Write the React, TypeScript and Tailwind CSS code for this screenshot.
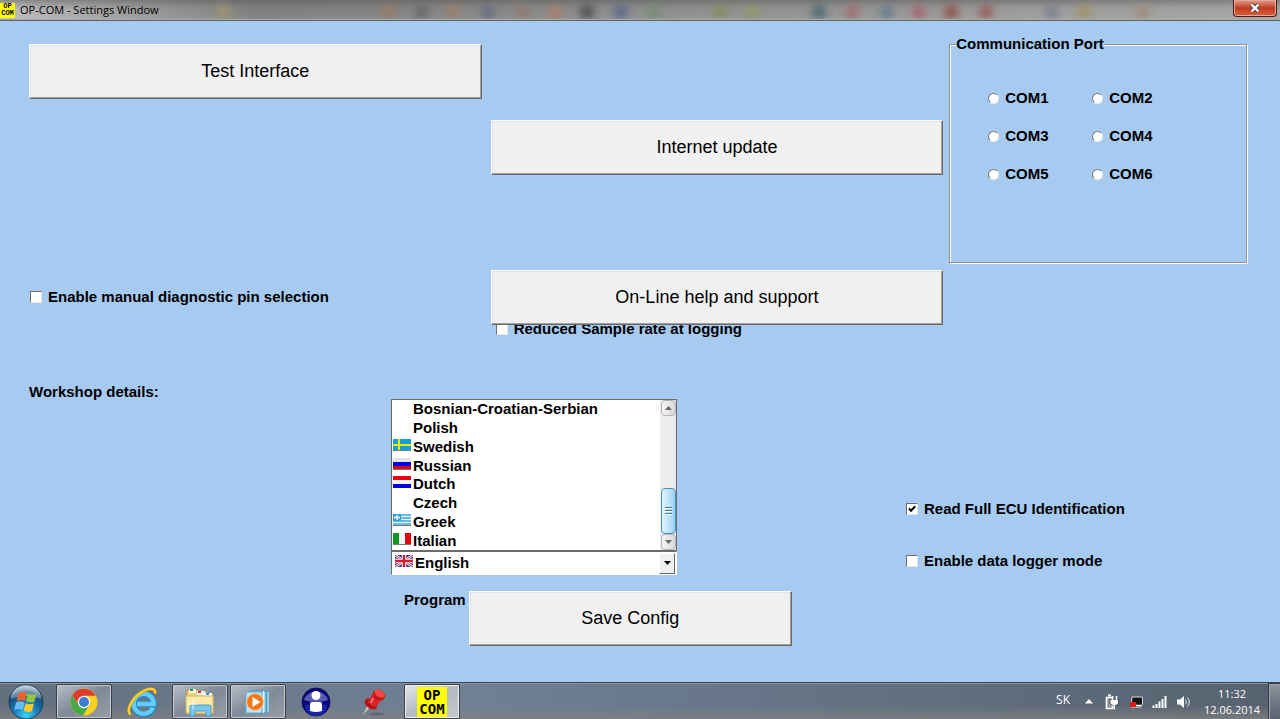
import React, { useState } from 'react';

const PORTS = ['COM1', 'COM2', 'COM3', 'COM4', 'COM5', 'COM6'];

const LANGUAGES = [
  'Bosnian-Croatian-Serbian',
  'Polish',
  'Swedish',
  'Russian',
  'Dutch',
  'Czech',
  'Greek',
  'Italian',
];

// Soft shapes showing through the glass title bar
const GLASS_SPOTS = [
  { x: 223, color: '#a89a60' },
  { x: 388, color: '#a07860' },
  { x: 422, color: '#5e5e62' },
  { x: 453, color: '#a07f66' },
  { x: 488, color: '#5f6580' },
  { x: 523, color: '#93766a' },
  { x: 555, color: '#b07a60' },
  { x: 587, color: '#3c3c3c' },
  { x: 621, color: '#4c5a8c' },
  { x: 654, color: '#6f8a70' },
  { x: 720, color: '#7f8f50' },
  { x: 752, color: '#8a9a58' },
  { x: 819, color: '#365866' },
  { x: 852, color: '#a06468' },
  { x: 887, color: '#58788c' },
  { x: 919, color: '#a85868' },
  { x: 951, color: '#8c3c34' },
  { x: 986, color: '#984a44' },
  { x: 1052, color: '#75788c' },
  { x: 1084, color: '#a09058' },
  { x: 1142, color: '#a08270' },
];

function Flag({ name }: { name: string }) {
  const common = { width: 18, height: 12, viewBox: '0 0 18 12', className: 'shrink-0', 'aria-hidden': true };
  switch (name) {
    case 'Swedish':
      return (
        <svg {...common}>
          <rect width="18" height="11" fill="#12a0dc" />
          <path d="M5 0h2v11H5zM0 5h18v2H0z" fill="#f4e800" />
          <path d="M0 11.5h18" stroke="#777" />
        </svg>
      );
    case 'Russian':
      return (
        <svg {...common}>
          <rect width="18" height="4" fill="#e4e4e4" />
          <rect y="4" width="18" height="4" fill="#0000e8" />
          <rect y="8" width="18" height="3" fill="#e00010" />
          <path d="M0 11.5h18" stroke="#777" />
        </svg>
      );
    case 'Dutch':
      return (
        <svg {...common}>
          <rect width="18" height="4" fill="#e80010" />
          <rect y="4" width="18" height="4" fill="#f4f4f4" />
          <rect y="8" width="18" height="4" fill="#0000d8" />
        </svg>
      );
    case 'Greek':
      return (
        <svg {...common}>
          <rect width="18" height="11" fill="#e8f4fa" />
          <path d="M0 1h18M0 4h18M0 7h18M0 10h18" stroke="#3fa9dc" strokeWidth="1.5" />
          <rect width="8" height="7" fill="#2f9fd8" />
          <path d="M4 1v5M1 3.5h6" stroke="#fff" strokeWidth="1.3" />
          <path d="M0 11.5h18" stroke="#777" />
        </svg>
      );
    case 'Italian':
      return (
        <svg {...common}>
          <rect width="6" height="11" fill="#0a9820" />
          <rect x="6" width="6" height="11" fill="#f2f2f2" />
          <rect x="12" width="6" height="11" fill="#e80010" />
          <path d="M0 11.5h18" stroke="#777" />
        </svg>
      );
    case 'English':
      return (
        <svg {...common}>
          <rect width="18" height="12" fill="#2c3a9c" />
          <path d="M0 0l18 12M18 0L0 12" stroke="#f0f0f4" strokeWidth="2.6" />
          <path d="M0 0l18 12M18 0L0 12" stroke="#d83040" strokeWidth="1" />
          <path d="M9 0v12M0 6h18" stroke="#f4f4f4" strokeWidth="4.4" />
          <path d="M9 0v12M0 6h18" stroke="#dc1c2c" strokeWidth="2.4" />
        </svg>
      );
    default:
      return <span className="w-[18px] shrink-0" />;
  }
}

function ClassicButton({ children, className = '' }: { children: React.ReactNode; className?: string }) {
  return (
    <button
      type="button"
      className={`h-[55px] border border-t-white border-l-white border-r-[#696969] border-b-[#696969] bg-[#f0f0f0] pb-0.5 text-lg leading-5 text-black shadow-[inset_-1px_-1px_0_#a0a0a0,inset_1px_1px_0_#e3e3e3] ${className}`}
    >
      {children}
    </button>
  );
}

function CheckOption({ label, checked = false, className = '' }: { label: string; checked?: boolean; className?: string }) {
  const [on, setOn] = useState(checked);
  return (
    <label className={`flex h-[18px] items-center gap-1.5 whitespace-nowrap ${className}`}>
      <span className="relative flex">
        <input
          type="checkbox"
          checked={on}
          onChange={() => setOn(!on)}
          className="h-3 w-3 appearance-none border border-t-[#6e6e6e] border-r-[#e8e8e8] border-b-[#e8e8e8] border-l-[#6e6e6e] bg-white"
        />
        {on && (
          <svg viewBox="0 0 12 12" className="pointer-events-none absolute inset-0 h-3 w-3" aria-hidden>
            <path d="M3 5.5l2 2.2 4.2-4.4" fill="none" stroke="#000" strokeWidth="2" />
          </svg>
        )}
      </span>
      {label}
    </label>
  );
}

function TitleBar() {
  return (
    <header className="relative flex h-[21px] items-start justify-between border-b border-[#5d6468] bg-linear-to-r from-[#bdbdbd] via-[#7f7f7f] via-20% to-[#a6a6a4]">
      <svg className="absolute inset-0 h-5 w-full" viewBox="0 0 1280 20" preserveAspectRatio="none" aria-hidden>
        <defs>
          <filter id="soft" x="-100%" y="-100%" width="300%" height="300%">
            <feGaussianBlur stdDeviation="4" />
          </filter>
          <linearGradient id="shade" x1="0" y1="0" x2="0" y2="1">
            <stop offset="0" stopColor="#444" stopOpacity=".4" />
            <stop offset=".5" stopColor="#666" stopOpacity="0" />
            <stop offset="1" stopColor="#fff" stopOpacity=".1" />
          </linearGradient>
        </defs>
        <rect width="1280" height="20" fill="url(#shade)" />
        {GLASS_SPOTS.map(spot => (
          <circle key={spot.x} cx={spot.x} cy="12" r="7" fill={spot.color} opacity=".8" filter="url(#soft)" />
        ))}
        <path d="M0 19.5h1280" stroke="#a9a9a4" />
      </svg>
      <div className="relative flex h-5 items-center gap-[5px]">
        <span className="flex h-[15px] w-[15px] flex-col items-center justify-center overflow-hidden bg-[#ffff00] font-['Liberation_Mono'] text-[7px] leading-[7px] font-bold">
          <span>OP</span>
          <span>COM</span>
        </span>
        <h1 className="font-['Open_Sans',sans-serif] text-[11px] leading-5 text-black">OP-COM - Settings Window</h1>
      </div>
      <button
        type="button"
        aria-label="Close"
        className="relative mr-[3px] flex h-[17px] w-[44px] items-center justify-center rounded-b border border-t-0 border-[#4a1a14] bg-linear-to-b from-[#dd9c8c] via-[#c23a20] via-50% to-[#d8603c] shadow-[inset_0_0_0_1px_#e8a898]"
      >
        <svg width="12" height="10" viewBox="0 0 12 10" aria-hidden>
          <path d="M2.5 1.5l7 7M9.5 1.5l-7 7" stroke="#4c4c5c" strokeWidth="4" />
          <path d="M2.5 1.5l7 7M9.5 1.5l-7 7" stroke="#fff" strokeWidth="2.2" />
        </svg>
      </button>
    </header>
  );
}

function PortGroup() {
  const [port, setPort] = useState('');
  return (
    <fieldset className="h-[228px] border border-[#8e9094] pl-[38px] shadow-[1px_1px_0_#fff,inset_1px_1px_0_#fff]">
      <legend className="-ml-8 bg-[#a6caf0] leading-[18px]">Communication Port</legend>
      <div className="mt-[26px] grid w-[208px] grid-cols-2">
        {PORTS.map(name => (
          <label key={name} className="flex h-[38px] items-center gap-1.5">
            <input
              type="radio"
              name="port"
              value={name}
              checked={port === name}
              onChange={() => setPort(name)}
              className="h-[11px] w-[11px] appearance-none rounded-full border border-t-[#777] border-r-[#eee] border-b-[#eee] border-l-[#777] bg-white checked:bg-black"
            />
            {name}
          </label>
        ))}
      </div>
    </fieldset>
  );
}

function LanguagePicker() {
  return (
    <div className="w-[286px]">
      <div className="flex h-[152px] border border-[#6b6b6b] bg-white">
        <ul role="listbox" aria-label="Languages" className="flex flex-1 flex-col">
          {LANGUAGES.map(lang => (
            <li key={lang} role="option" aria-selected={false} className="flex min-h-0 flex-1 items-center gap-0.5 pl-px leading-[18px]">
              <span className="flex pb-1">
                <Flag name={lang} />
              </span>
              {lang}
            </li>
          ))}
        </ul>
        <div className="flex w-4 flex-col items-center bg-[#ececec]">
          <button type="button" aria-label="Scroll up" className="flex h-4 w-[15px] items-center justify-center rounded-sm border border-[#b4b4b4] bg-linear-to-r from-[#f6f6f6] to-[#d6d6d6]">
            <svg width="7" height="4" viewBox="0 0 7 4" aria-hidden>
              <path d="M0 4l3.5-4L7 4z" fill="#666" />
            </svg>
          </button>
          <div className="flex-1" />
          <div className="flex h-[46px] w-[15px] flex-col items-center justify-center gap-px rounded-sm border border-[#4a90bc] bg-linear-to-r from-[#e2f4fd] via-[#c0e4f8] to-[#98d0f0]">
            <span className="h-0.5 w-[7px] border-b border-white bg-[#3b7394]" />
            <span className="h-0.5 w-[7px] border-b border-white bg-[#3b7394]" />
            <span className="h-0.5 w-[7px] border-b border-white bg-[#3b7394]" />
          </div>
          <button type="button" aria-label="Scroll down" className="flex h-4 w-[15px] items-center justify-center rounded-sm border border-[#b4b4b4] bg-linear-to-r from-[#f6f6f6] to-[#d6d6d6]">
            <svg width="7" height="4" viewBox="0 0 7 4" aria-hidden>
              <path d="M0 0l3.5 4L7 0z" fill="#666" />
            </svg>
          </button>
        </div>
      </div>
      <div className="flex h-6 items-center border border-t-[#6b6b6b] border-r-white border-b-white border-l-[#6b6b6b] bg-white pr-px pl-[3px]">
        <span className="flex pb-1">
          <Flag name="English" />
        </span>
        <select id="program-language" className="h-5 min-w-0 flex-1 appearance-none bg-white pl-0.5 leading-5 font-bold text-black">
          <option>English</option>
        </select>
        <span className="flex h-[21px] w-4 items-center justify-center border border-t-white border-r-[#666] border-b-[#666] border-l-white bg-[#f0f0f0]">
          <svg width="7" height="4" viewBox="0 0 7 4" aria-hidden>
            <path d="M0 0h7L3.5 4z" fill="#000" />
          </svg>
        </span>
      </div>
    </div>
  );
}

function StartOrb() {
  return (
    <svg width="36" height="36" viewBox="0 0 36 36" aria-hidden>
      <defs>
        <radialGradient id="orb" cx=".5" cy=".9" r=".85">
          <stop offset="0" stopColor="#38d4f8" />
          <stop offset=".45" stopColor="#1878b4" />
          <stop offset=".8" stopColor="#174a74" />
          <stop offset="1" stopColor="#9ab8cc" />
        </radialGradient>
      </defs>
      <circle cx="18" cy="18" r="17" fill="url(#orb)" stroke="#1b3c5a" />
      <path d="M3 15a15 14 0 0 1 30 0c-8-4-22-4-30 0z" fill="#fff" opacity=".35" />
      <path d="M10.500 9.500c3-2 5-2 8-.5l-1.500 8c-3-1.500-5-1.500-8.500 0z" fill="#f0642c" />
      <path d="M19.500 9.500c3 1.500 5.500 1.500 9 .2l-2 8c-3 1.200-5.500 1-8.500-.4z" fill="#92c840" />
      <path d="M8 18.500c3-1.600 5.500-1.500 8.500 0l-1.700 7.500c-3-1.500-5-1.300-8.500 0z" fill="#68bcf0" />
      <path d="M17.600 19c3 1.500 5.400 1.500 8.400.3l-2 8c-3 1.200-5.400.8-8.200-.6z" fill="#fcc828" />
    </svg>
  );
}

function ChromeIcon() {
  return (
    <svg width="28" height="28" viewBox="0 0 28 28" aria-hidden>
      <circle cx="14" cy="14" r="13.500" fill="#fbd023" />
      <path d="M2.300 7.200A13.500 13.500 0 0 0 13 27.450L19.500 17 14 14 8.500 17z" fill="#47a847" />
      <path d="M2.300 7.200A13.500 13.500 0 0 1 25.700 7.800H14l-6 8z" fill="#dc3c2c" />
      <circle cx="14" cy="14" r="6.300" fill="#f4f4f4" />
      <circle cx="14" cy="14" r="5" fill="#3a7cd0" />
    </svg>
  );
}

function ExplorerIcon() {
  return (
    <svg width="30" height="30" viewBox="0 0 30 30" aria-hidden>
      <path
        d="M26.500 20.500A10 10 0 1 1 26 13q.8 2 .8 4H10.500"
        fill="none"
        stroke="#1c86cc"
        strokeWidth="6"
      />
      <path
        d="M26 20.500A10 10 0 1 1 26 13q.8 2 .8 4H10"
        fill="none"
        stroke="#62ccfa"
        strokeWidth="4.500"
      />
      <path d="M3.500 27.500C-1 24 4 12 14 5.500 21 1 29 0 28 6.500" fill="none" stroke="#c89410" strokeWidth="3.200" />
      <path d="M3.500 27.500C-1 24 4 12 14 5.500 21 1 29 0 28 6.500" fill="none" stroke="#fcd22c" strokeWidth="2.200" />
    </svg>
  );
}

function FolderIcon() {
  return (
    <svg width="32" height="30" viewBox="0 0 32 30" aria-hidden>
      <path d="M3 3h10l2 2h8l1 2h5v20H3z" fill="#eed27c" stroke="#b89848" />
      <path d="M5 2h7v4H5z" fill="#f8f4e0" />
      <path d="M6 2h3v2H6z" fill="#18a030" />
      <path d="M13 4h8v4h-8z" fill="#f4f4f4" />
      <path d="M14 4h3v2h-3z" fill="#d83020" />
      <path d="M20 6h8v4h-8z" fill="#fff" />
      <path d="M22 6h3v2h-3z" fill="#2c90dc" />
      <path d="M2 9h27v17H2z" fill="#fae9a8" stroke="#d8b860" />
      <path d="M6 29v-9q0-2 2-2h17q2 0 2 2v9h-5v-5H11v5z" fill="#7cc8ec" stroke="#4a9cc8" />
      <path d="M9 12v10M4 17h10" stroke="#fff" opacity=".8" />
    </svg>
  );
}

function MediaIcon() {
  return (
    <svg width="28" height="26" viewBox="0 0 28 26" aria-hidden>
      <path d="M8 2h17v21H8z" fill="#4aa0cc" />
      <path d="M6 2h16v22H6z" fill="#a8dcf0" stroke="#3c90bc" />
      <path d="M19.500 2v22M24 3v20" stroke="#e4f6fc" />
      <path d="M2 3h16v21H2z" fill="#bce4f2" stroke="#60acd0" />
      <circle cx="11" cy="13" r="8.500" fill="#f07818" stroke="#f8d0a8" />
      <path d="M8.500 8l8 5-8 5z" fill="#fff" />
    </svg>
  );
}

function PersonIcon() {
  return (
    <svg width="30" height="30" viewBox="0 0 30 30" aria-hidden>
      <circle cx="15" cy="15" r="14" fill="#08087c" stroke="#15154c" />
      <path d="M3 13a12.500 12 0 0 1 24 0q-12 4-24 0z" fill="#a8b0e0" opacity=".5" />
      <path d="M4 18a11 11 0 0 0 22 0z" fill="#2030c0" opacity=".7" />
      <circle cx="15" cy="8.500" r="4.500" fill="#fff" />
      <path d="M9 24v-7q0-2 2-2h8q2 0 2 2v7q-6 2-12 0z" fill="#fff" />
    </svg>
  );
}

function PinIcon() {
  return (
    <svg width="28" height="30" viewBox="0 0 28 30" aria-hidden>
      <ellipse cx="17" cy="27" rx="8" ry="1.500" fill="#4c5560" opacity=".6" />
      <path d="M8 18L3 28l7-8z" fill="#e8e8e8" stroke="#999" strokeWidth=".7" />
      <ellipse cx="11" cy="17" rx="7" ry="4.500" transform="rotate(35 11 17)" fill="#b81014" />
      <path d="M13 6l8 7-5 7q-5 0-8-5z" fill="#dc2426" />
      <ellipse cx="19" cy="8" rx="6.500" ry="5" transform="rotate(35 19 8)" fill="#c4181a" />
      <ellipse cx="19.500" cy="6.500" rx="5.500" ry="3.500" transform="rotate(35 19.500 6.500)" fill="#f04840" />
      <path d="M13 11l-2 5" stroke="#ff9088" strokeWidth="1.500" />
    </svg>
  );
}

const FRAMES = {
  idle: '',
  open: 'rounded-xs border border-[#3c424a] bg-linear-to-br from-[#b9c0c8] via-[#7f8a98] to-[#9a9fa6] shadow-[inset_0_0_0_1px_#c2c8ce]',
  current: 'rounded-xs border border-[#3c424a] bg-linear-to-br from-[#e4e8ec] via-[#b4bac2] to-[#c6cacf] shadow-[inset_0_0_0_1px_#eceef0]',
};

function TaskButton({ label, state = 'idle', children }: { label: string; state?: keyof typeof FRAMES; children: React.ReactNode }) {
  return (
    <button type="button" aria-label={label} className={`flex h-full w-14 items-center justify-center overflow-hidden ${FRAMES[state]}`}>
      {children}
    </button>
  );
}

function Tray() {
  return (
    <div className="flex items-center font-['Open_Sans',sans-serif] text-[11px] text-white">
      <span className="mr-[15px] pb-1 text-xs">SK</span>
      <button type="button" aria-label="Show hidden icons" className="mr-3">
        <svg width="8" height="5" viewBox="0 0 8 5" aria-hidden>
          <path d="M0 4.500L4 0l4 4.500z" fill="#fff" />
        </svg>
      </button>
      <svg width="14" height="16" viewBox="0 0 14 16" className="mr-2.5" aria-hidden>
        <path d="M1.500 3.500h6v11h-6z" fill="#8a929c" stroke="#fff" strokeWidth="1.600" />
        <path d="M3 1.500h3" stroke="#fff" strokeWidth="2" />
        <path d="M5 5.500h8.500V8q0 3.500-4.200 3.500T5 8z" fill="#fff" stroke="#222" strokeWidth=".7" />
        <path d="M7.500 2v4M11.500 2v4M9.300 11v4.500" stroke="#fff" strokeWidth="1.500" />
      </svg>
      <svg width="14" height="12" viewBox="0 0 14 12" className="mr-[9px]" aria-hidden>
        <path d="M3 1h10.500v7l-2 3H2z" fill="#161616" stroke="#fff" strokeWidth=".8" />
        <path d="M1 6h6v5H1z" fill="#e01818" />
        <path d="M7 9.500h5" stroke="#fff" strokeWidth="1.500" />
      </svg>
      <svg width="15" height="12" viewBox="0 0 15 12" className="mr-2.5" aria-hidden>
        <path d="M1.500 12V9.500M4.500 12V8M7.500 12V5.500M10.500 12V3M13.500 12V0" stroke="#fff" strokeWidth="2" />
      </svg>
      <svg width="13" height="14" viewBox="0 0 13 14" className="mr-4" aria-hidden>
        <path d="M0 4.500h3L7 1v12L3 9.500H0z" fill="#fff" />
        <path d="M8.500 4.500q2 2.500 0 5M10.500 2.500q3.500 4.500 0 9" fill="none" stroke="#dfe4e8" />
      </svg>
      <div className="mr-2.5 flex w-[52px] flex-col items-center leading-4">
        <time>11:32</time>
        <time>12.06.2014</time>
      </div>
      <button
        type="button"
        aria-label="Show desktop"
        className="h-[37px] w-3 border border-r-0 border-[#353c44] bg-linear-to-b from-[#8d959e] to-[#59626d] shadow-[inset_1px_1px_0_#9aa2aa]"
      />
    </div>
  );
}

function Taskbar() {
  return (
    <footer className="border-t border-[#3b444e] bg-linear-to-r from-[#64707e] via-[#708196] via-35% to-[#56626f]">
      <div className="flex h-9 items-stretch justify-between border-t border-[#8b96a2] bg-linear-to-b from-transparent from-60% to-[#808080]/80">
        <div className="flex">
          <button type="button" aria-label="Start" className="mr-[5px] flex w-[51px] items-center justify-center">
            <StartOrb />
          </button>
          <nav aria-label="Running programs" className="flex gap-0.5">
            <TaskButton label="Chrome" state="open"><ChromeIcon /></TaskButton>
            <TaskButton label="Internet Explorer"><ExplorerIcon /></TaskButton>
            <TaskButton label="Explorer" state="open"><FolderIcon /></TaskButton>
            <TaskButton label="Media Player" state="open"><MediaIcon /></TaskButton>
            <TaskButton label="Contacts"><PersonIcon /></TaskButton>
            <TaskButton label="Pin"><PinIcon /></TaskButton>
            <TaskButton label="OP-COM" state="current">
              <span className="flex h-[30px] w-[30px] flex-col items-center justify-center bg-[#ffff00] font-['DejaVu_Sans_Mono',monospace] text-sm leading-[14px] font-bold text-black">
                <span>OP</span>
                <span>COM</span>
              </span>
            </TaskButton>
          </nav>
        </div>
        <Tray />
      </div>
    </footer>
  );
}

export default function App() {
  return (
    <div className="flex min-h-screen flex-col bg-[#a6caf0] font-['Liberation_Sans',Arial,sans-serif] text-black">
      <TitleBar />

      <main className="flex-1 text-[15px] leading-[18px] font-bold">
        <section className="flex pr-[33px] pl-[29px]">
          <div className="mr-[9px] flex flex-[453] flex-col pt-[23px] *:[button]:font-normal">
            <ClassicButton>Test Interface</ClassicButton>
            <CheckOption label="Enable manual diagnostic pin selection" className="mt-[189px] pl-px" />
          </div>
          <div className="mr-1.5 flex flex-[453] flex-col pt-[99px] *:[button]:font-normal">
            <ClassicButton>Internet update</ClassicButton>
            <ClassicButton className="relative z-10 mt-[95px]">On-Line help and support</ClassicButton>
            <CheckOption label="Reduced Sample rate at logging" className="-mt-[5px] pl-[5px]" />
          </div>
          <div className="flex-[298] pt-3.5">
            <PortGroup />
          </div>
        </section>

        <section className="mt-[45px] grid grid-cols-[362fr_515fr_342fr] pr-8 pl-[29px]">
          <h2>Workshop details:</h2>
          <div className="flex flex-col pt-4">
            <LanguagePicker />
            <div className="mt-4 flex gap-[3px] pl-[13px] *:[button]:font-normal">
              <label htmlFor="program-language">Program</label>
              <ClassicButton className="w-[323px]">Save Config</ClassicButton>
            </div>
          </div>
          <div className="flex flex-col gap-[34px] pt-[117px]">
            <CheckOption label="Read Full ECU Identification" checked />
            <CheckOption label="Enable data logger mode" />
          </div>
        </section>
      </main>

      <Taskbar />
    </div>
  );
}
